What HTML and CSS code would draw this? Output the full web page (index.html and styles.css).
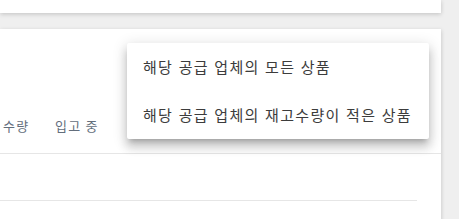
FILE: index.html
```html
<!DOCTYPE html>
<html>
<head>
    <title>공급 업체 상품</title>
    <link rel="stylesheet" href="styles.css">
</head>
<body>
    <div class="page">
        <div class="card card-top"></div>

        <div class="card card-table">
            <div class="toolbar"></div>
            <div class="table-head">
                <span class="col col-qty">수량</span>
                <span class="col col-incoming">입고 중</span>
            </div>
            <div class="table-row"></div>
        </div>
    </div>

    <ul class="menu">
        <li class="menu-item">해당 공급 업체의 모든 상품</li>
        <li class="menu-item">해당 공급 업체의 재고수량이 적은 상품</li>
    </ul>
</body>
</html>
```

FILE: styles.css
```css
body {
    margin: 0;
    background: #efefef;
    font-family: "Noto Sans CJK KR", "Noto Sans", sans-serif;
    overflow: hidden;
}

.page {
    width: 441px;
}

.card {
    background: #fff;
    box-shadow: 0 2px 4px rgba(0, 0, 0, 0.12), 1px 0 4px rgba(0, 0, 0, 0.06);
}

.card-top {
    height: 13px;
}

.card-table {
    margin-top: 16px;
    height: 200px;
}

.toolbar {
    height: 68px;
}

.table-head {
    display: flex;
    align-items: center;
    height: 56px;
    border-bottom: 1px solid #e6e6e6;
    font-size: 13px;
    letter-spacing: 1.2px;
    color: #636e7c;
}

.col-qty {
    padding-left: 3px;
    width: 52px;
}

.table-row {
    height: 46px;
    margin-right: 24px;
    border-bottom: 1px solid #e6e6e6;
}

/* 드롭다운 메뉴 */
.menu {
    position: absolute;
    top: 43px;
    left: 127px;
    width: 302px;
    margin: 0;
    padding: 0;
    list-style: none;
    background: #fff;
    border-radius: 2px;
    box-shadow: 0 5px 5px -3px rgba(0, 0, 0, 0.2), 0 8px 10px 1px rgba(0, 0, 0, 0.14), 0 3px 14px 2px rgba(0, 0, 0, 0.12);
}

.menu-item {
    height: 48px;
    line-height: 48px;
    padding-left: 16px;
    font-size: 15px;
    color: #3c3c3c;
    letter-spacing: 1.3px;
    word-spacing: 0.8px;
    white-space: nowrap;
}
```
